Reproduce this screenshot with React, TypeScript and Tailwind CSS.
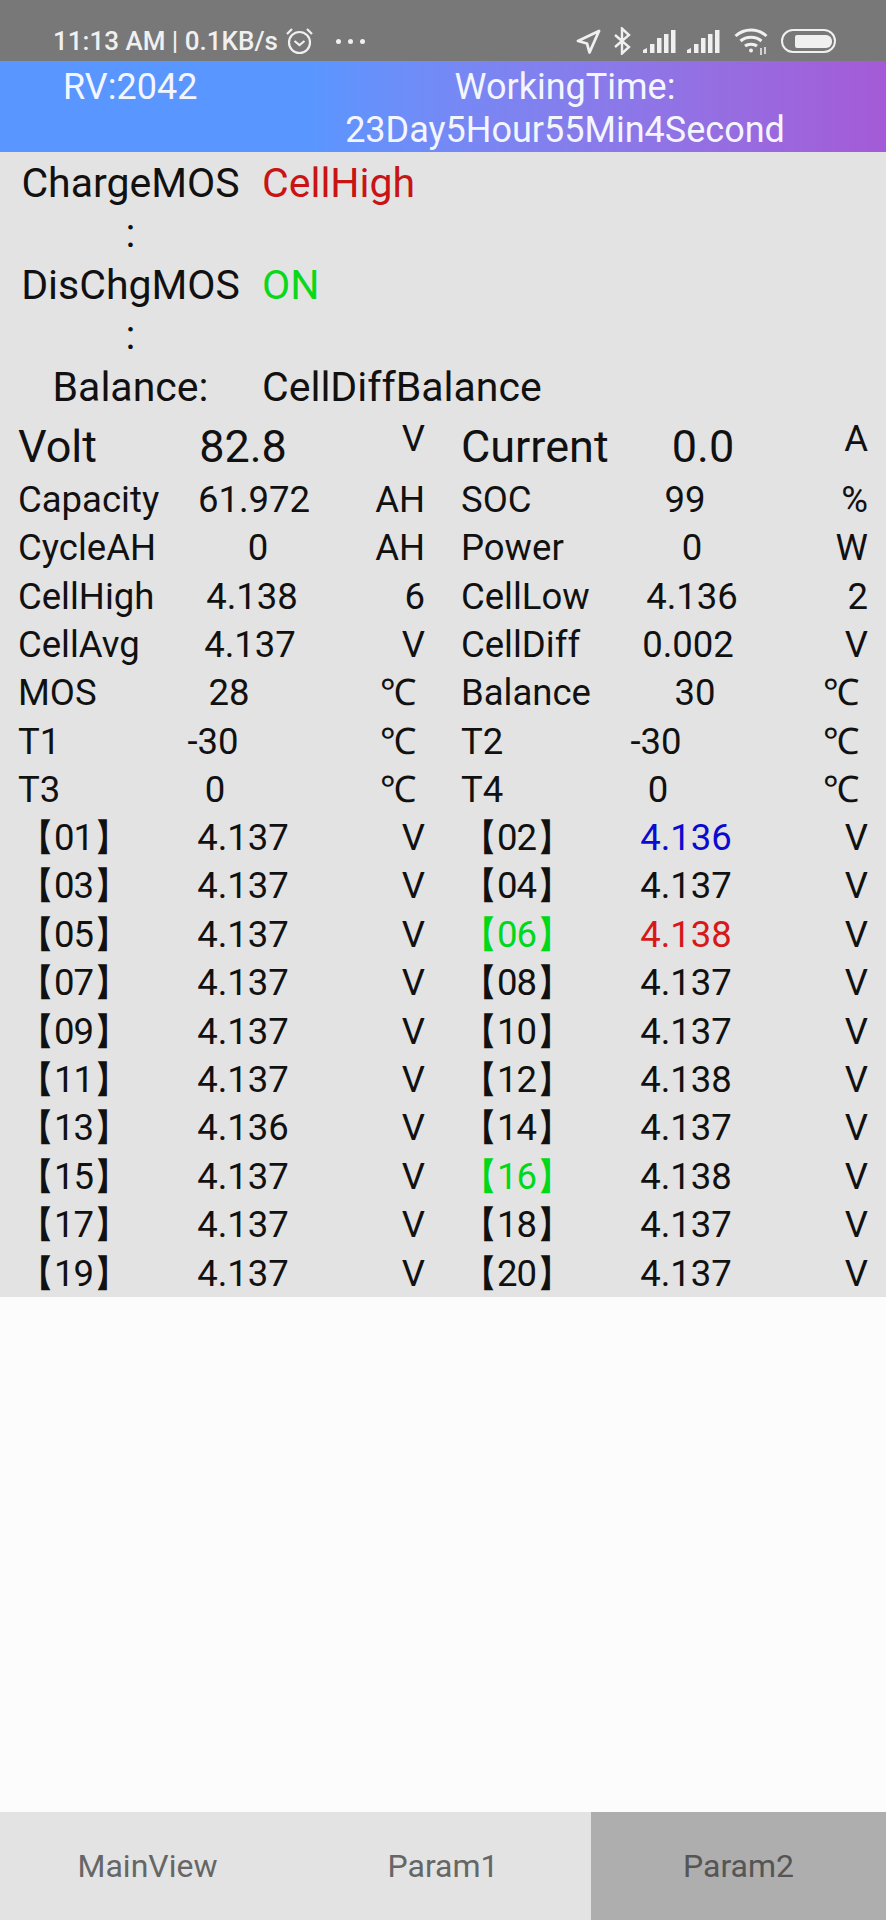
type Stat = {
  label: string;
  value: string;
  unit: string;
  labelW: string;
};

const stats: Stat[][] = [
  [
    { label: "Capacity", value: "61.972", unit: "AH", labelW: "w-[176px]" },
    { label: "SOC", value: "99", unit: "%", labelW: "w-[164px]" },
  ],
  [
    { label: "CycleAH", value: "0", unit: "AH", labelW: "w-[180px]" },
    { label: "Power", value: "0", unit: "W", labelW: "w-[171px]" },
  ],
  [
    { label: "CellHigh", value: "4.138", unit: "6", labelW: "w-[174px]" },
    { label: "CellLow", value: "4.136", unit: "2", labelW: "w-[171px]" },
  ],
  [
    { label: "CellAvg", value: "4.137", unit: "V", labelW: "w-[172px]" },
    { label: "CellDiff", value: "0.002", unit: "V", labelW: "w-[167px]" },
  ],
  [
    { label: "MOS", value: "28", unit: "℃", labelW: "w-[151px]" },
    { label: "Balance", value: "30", unit: "℃", labelW: "w-[174px]" },
  ],
  [
    { label: "T1", value: "-30", unit: "℃", labelW: "w-[135px]" },
    { label: "T2", value: "-30", unit: "℃", labelW: "w-[135px]" },
  ],
  [
    { label: "T3", value: "0", unit: "℃", labelW: "w-[137px]" },
    { label: "T4", value: "0", unit: "℃", labelW: "w-[137px]" },
  ],
];

const cells = [
  "4.137", "4.136", "4.137", "4.137", "4.137", "4.138", "4.137", "4.137", "4.137", "4.137",
  "4.137", "4.138", "4.136", "4.137", "4.137", "4.138", "4.137", "4.137", "4.137", "4.137",
];

function StatCell({ stat }: { stat: Stat }) {
  return (
    <div className="flex w-1/2 items-center pl-[18px] pr-[18px] pt-[4px]">
      <span className={stat.labelW}>{stat.label}</span>
      <span className="w-[120px] text-center">{stat.value}</span>
      <span className={stat.unit === "℃" ? "ml-auto mr-[9px]" : "ml-auto"}>{stat.unit}</span>
    </div>
  );
}

function VoltCell({ stat }: { stat: Stat }) {
  return (
    <div className="flex w-1/2 items-center pl-[18px] pr-[18px] pt-[4px]">
      <span className={`text-[45px] ${stat.labelW}`}>{stat.label}</span>
      <span className="w-[120px] text-center text-[45px]">{stat.value}</span>
      <span className="ml-auto -translate-y-[8px]">{stat.unit}</span>
    </div>
  );
}

function CellVolt({ index, value }: { index: number; value: string }) {
  const name = String(index + 1).padStart(2, "0");
  const numColor = index === 5 || index === 15 ? "text-[#00d81c]" : "";
  const valColor = index === 1 ? "text-[#0a0ad0]" : index === 5 ? "text-[#d81818]" : "";
  return (
    <div className="flex h-[48.4px] items-center pr-[18px] pt-[3px]">
      <span className={`w-[183px] whitespace-nowrap pl-[18px] tracking-[-1px] ${numColor}`}>【{name}】</span>
      <span className={`w-[120px] text-center ${valColor}`}>{value}</span>
      <span className="ml-auto">V</span>
    </div>
  );
}

function Signal() {
  return (
    <svg width="33" height="23" viewBox="0 0 33 23" fill="currentColor">
      <path d="M0 23v-3l4-2v5z" />
      <rect x="7" y="14" width="4.500" height="9" />
      <rect x="14" y="8" width="4.500" height="15" />
      <rect x="21" y="4" width="4.500" height="19" />
      <rect x="28" y="0" width="4.500" height="23" />
    </svg>
  );
}

function StatusBar() {
  return (
    <div className="flex h-[61px] items-center justify-between bg-[#787878] pl-[53px] pr-[50px] pt-[21px] text-[#f0f0f0]">
      <div className="flex items-center text-[26px] font-medium">
        <span>11:13 AM | 0.1KB/s</span>
        <svg width="29" height="28" viewBox="0 0 29 28" fill="none" stroke="currentColor" strokeWidth="2.200" className="ml-[7px]">
          <circle cx="14.500" cy="15.500" r="10.500" />
          <path d="M9.500 14l5 4 5-4M2 7l5-5M27 7l-5-5" />
        </svg>
        <span className="ml-[22px] flex gap-[7px]">
          <i className="h-[5px] w-[5px] rounded-full bg-[#f0f0f0]" />
          <i className="h-[5px] w-[5px] rounded-full bg-[#f0f0f0]" />
          <i className="h-[5px] w-[5px] rounded-full bg-[#f0f0f0]" />
        </span>
      </div>
      <div className="flex items-center">
        <svg width="25" height="25" viewBox="0 0 25 25" fill="none" stroke="currentColor" strokeWidth="2.800" strokeLinejoin="round">
          <path d="M23 2L2 12l9 2.500 2.500 9z" />
        </svg>
        <svg width="17" height="28" viewBox="0 0 17 28" fill="none" stroke="currentColor" strokeWidth="2.400" className="ml-[13px]">
          <path d="M1 8l14 12-7 6.500V1.500L15 8 1 20" />
        </svg>
        <span className="ml-[12px] flex gap-[11px]">
          <Signal />
          <Signal />
        </span>
        <svg width="34" height="28" viewBox="0 0 34 28" fill="none" stroke="currentColor" strokeWidth="3" className="ml-[14px]">
          <path d="M1.500 9c9-8 22-8 31 0M6.500 14c6-5 15-5 21 0M11 19c3-2.500 9-2.500 12 0" />
          <circle cx="17" cy="23.500" r="2" fill="currentColor" stroke="none" />
          <path d="M27 21v7M31 20v7" strokeWidth="1.500" />
        </svg>
        <div className="ml-[13px] flex h-[24px] w-[55px] items-center justify-end rounded-full border-[2.5px] border-[#f0f0f0] pr-[2px]">
          <div className="h-[13px] w-[37px] rounded-l-[2px] rounded-r-[6px] bg-[#f0f0f0]" />
        </div>
      </div>
    </div>
  );
}

export default function App() {
  return (
    <div className="flex h-[1920px] w-[886px] flex-col bg-[#fcfcfc] font-['Roboto',sans-serif] text-[36.500px] text-[#111]">
      <StatusBar />
      <div className="flex h-[91px] bg-gradient-to-r from-[#5a96ff] from-35% to-[#a45ad6] pt-[5px] text-[36px] leading-[43px] text-[#f4f6ff]">
        <div className="w-[335px] pl-[63px]">RV:2042</div>
        <div className="w-[460px] text-center">WorkingTime: 23Day5Hour55Min4Second</div>
      </div>
      <div className="bg-[#e3e3e3]">
        <div className="text-[41px] leading-[50px]">
          <div className="flex h-[102px] pt-[6px]">
            <div className="ml-[15px] w-[231px] text-center">
              ChargeMOS
              <br />:
            </div>
            <div className="ml-[16px] text-[#c81414]">CellHigh</div>
          </div>
          <div className="flex h-[102px] pt-[6px]">
            <div className="ml-[15px] w-[231px] text-center">
              DisChgMOS
              <br />:
            </div>
            <div className="ml-[16px] text-[#0ad81c]">ON</div>
          </div>
          <div className="flex h-[60px] pt-[6px]">
            <div className="ml-[15px] w-[231px] text-center">Balance:</div>
            <div className="ml-[16px]">CellDiffBalance</div>
          </div>
        </div>
        <div className="flex h-[58px] leading-[58px]">
          <VoltCell stat={{ label: "Volt", value: "82.8", unit: "V", labelW: "w-[165px]" }} />
          <VoltCell stat={{ label: "Current", value: "0.0", unit: "A", labelW: "w-[182px]" }} />
        </div>
        {stats.map((row) => (
          <div key={row[0].label} className="flex h-[48.4px]">
            <StatCell stat={row[0]} />
            <StatCell stat={row[1]} />
          </div>
        ))}
        <div className="grid grid-cols-2">
          {cells.map((value, i) => (
            <CellVolt key={i} index={i} value={value} />
          ))}
        </div>
      </div>
      <div className="flex-1" />
      <div className="flex h-[108px] text-[32px] text-[#666]">
        <div className="flex w-[295px] items-center justify-center bg-[#e3e3e3]">MainView</div>
        <div className="flex w-[296px] items-center justify-center bg-[#e3e3e3]">Param1</div>
        <div className="flex flex-1 items-center justify-center bg-[#aeaeae] text-[#555]">Param2</div>
      </div>
    </div>
  );
}
